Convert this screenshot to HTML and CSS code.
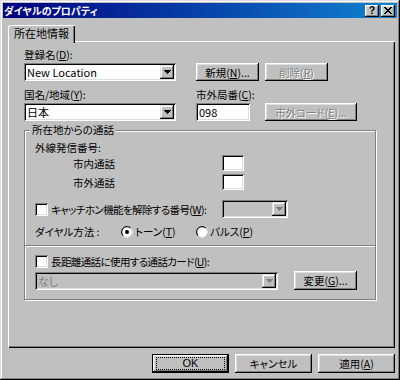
FILE: index.html
```html
<!DOCTYPE html>
<html lang="ja">
<head>
<meta charset="utf-8">
<title>ダイヤルのプロパティ</title>
<link rel="stylesheet" href="styles.css">
</head>
<body>
<div class="window">
  <div class="titlebar">
    <span class="title">ダイヤルのプロパティ</span>
    <span class="tb-btns">
      <span class="tb-btn help">?</span>
      <span class="tb-btn close"><svg width="8" height="7" viewBox="0 0 8 7" shape-rendering="crispEdges"><path d="M0 0h2v1h-2z M6 0h2v1h-2z M1 1h2v1h-2z M5 1h2v1h-2z M2 2h4v1h-4z M3 3h2v1h-2z M2 4h4v1h-4z M1 5h2v1h-2z M5 5h2v1h-2z M0 6h2v1h-2z M6 6h2v1h-2z" fill="#000"/></svg></span>
    </span>
  </div>
  <div class="content">
    <div class="tabs"><div class="tab">所在地情報</div></div>
    <div class="panel">
      <div class="lbl-row">
        <span class="col1">登録名(<u>D</u>):</span>
      </div>
      <div class="ctl-row">
        <div class="combo w152"><span class="val">New Location</span><span class="arrow"><svg width="7" height="4" viewBox="0 0 7 4" shape-rendering="crispEdges"><path d="M0 0h7v1h-1v1h-1v1h-1v1h-1v-1h-1v-1h-1v-1h-1z" fill="#000"/></svg></span></div>
        <span class="btn w63 ml20">新規(<u>N</u>)...</span>
        <span class="btn w63 ml6 disabled">削除(<u>R</u>)</span>
      </div>
      <div class="lbl-row mt7">
        <span class="col1">国名/地域(<u>Y</u>):</span>
        <span>市外局番(<u>C</u>):</span>
      </div>
      <div class="ctl-row">
        <div class="combo w152"><span class="val">日本</span><span class="arrow"><svg width="7" height="4" viewBox="0 0 7 4" shape-rendering="crispEdges"><path d="M0 0h7v1h-1v1h-1v1h-1v1h-1v-1h-1v-1h-1v-1h-1z" fill="#000"/></svg></span></div>
        <div class="field w54 ml20"><span class="val">098</span></div>
        <span class="btn w92 ml15 disabled">市外コード(<u>E</u>)...</span>
      </div>

      <div class="group">
        <div class="legend">所在地からの通話</div>
        <div class="line mt5">外線発信番号:</div>
        <div class="num-row mt1">
          <span class="num-lbl">市内通話</span>
          <span class="field small"></span>
        </div>
        <div class="num-row mt3">
          <span class="num-lbl">市外通話</span>
          <span class="field small"></span>
        </div>
        <div class="chk-row mt10">
          <span class="chk-lbl"><span class="check"></span><span class="tight">キャッチホン機能を解除する番号(<u>W</u>):</span></span>
          <div class="combo w66 off"><span class="val"></span><span class="arrow"><svg width="7" height="4" viewBox="0 0 7 4" shape-rendering="crispEdges"><path d="M0 0h7v1h-1v1h-1v1h-1v1h-1v-1h-1v-1h-1v-1h-1z" fill="#808080"/></svg></span></div>
        </div>
        <div class="dial-row mt7">
          <span class="dial-lbl">ダイヤル方法 :</span>
          <span class="radio-opt w75"><svg class="radio" width="12" height="12" viewBox="0 0 12 12"><circle cx="6" cy="6" r="5.5" fill="#fff" stroke="#808080"/><path d="M2.2 9.8 A5 5 0 0 1 9.8 2.2" fill="none" stroke="#000" stroke-width="1"/><path d="M9.8 2.2 A5 5 0 0 1 2.2 9.8" fill="none" stroke="#fff" stroke-width="1"/><circle cx="6" cy="6" r="2" fill="#000"/></svg>トーン(<u>T</u>)</span>
          <span class="radio-opt"><svg class="radio" width="12" height="12" viewBox="0 0 12 12"><circle cx="6" cy="6" r="5.5" fill="#fff" stroke="#808080"/><path d="M2.2 9.8 A5 5 0 0 1 9.8 2.2" fill="none" stroke="#000" stroke-width="1"/><path d="M9.8 2.2 A5 5 0 0 1 2.2 9.8" fill="none" stroke="#fff" stroke-width="1"/></svg>パルス(<u>P</u>)</span>
        </div>
        <div class="sep"></div>
        <div class="chk-row2">
          <span class="check"></span><span class="tight">長距離通話に使用する通話カード(<u>U</u>):</span>
        </div>
        <div class="card-row">
          <div class="combo w243 off"><span class="val gray">なし</span><span class="arrow"><svg width="7" height="4" viewBox="0 0 7 4" shape-rendering="crispEdges"><path d="M0 0h7v1h-1v1h-1v1h-1v1h-1v-1h-1v-1h-1v-1h-1z" fill="#808080"/></svg></span></div>
          <span class="btn w63 tall ml16">変更(<u>G</u>)...</span>
        </div>
      </div>
    </div>
    <div class="footer">
      <span class="btn default"><span class="focus">OK</span></span>
      <span class="btn fbtn">キャンセル</span>
      <span class="btn fbtn wide">適用(<u>A</u>)</span>
    </div>
  </div>
</div>
</body>
</html>
```

FILE: styles.css
```css
* { box-sizing: border-box; }
html, body { margin: 0; padding: 0; }
body {
  width: 400px; height: 380px; overflow: hidden;
  background: #c0c0c0;
  font-family: "Noto Sans CJK JP", "Liberation Sans", sans-serif;
  font-size: 10.5px; line-height: 13px; color: #000;
  font-feature-settings: "palt";
}
u { text-decoration: underline; text-underline-offset: 1px; }
.tight { letter-spacing: -0.6px; white-space: nowrap; }

.window {
  width: 400px; height: 380px; padding: 3px;
  background: #c0c0c0;
  box-shadow: inset -1px -1px #000, inset 1px 1px #dfdfdf, inset -2px -2px #808080, inset 2px 2px #fff;
  display: flex; flex-direction: column;
}
.titlebar {
  height: 15px; flex: none;
  background: linear-gradient(90deg, #000080, #1084d0);
  display: flex; align-items: center; justify-content: space-between;
  padding: 0 2px 0 1px;
}
.title { color: #fff; font-weight: bold; font-size: 10px; line-height: 15px; }
.tb-btns { display: flex; gap: 2px; }
.tb-btn {
  width: 14px; height: 12px; background: #c0c0c0;
  box-shadow: inset -1px -1px #000, inset 1px 1px #fff, inset -2px -2px #808080, inset 2px 2px #dfdfdf;
  display: flex; align-items: center; justify-content: center;
  font-family: "Liberation Sans", sans-serif; font-weight: bold; font-size: 10px; line-height: 10px;
}
.tb-btn svg { display: block; margin-left: -1px; }

.content { flex: 1; display: flex; flex-direction: column; padding: 7px 2px 0 5px; }
.tabs { display: flex; height: 16px; flex: none; position: relative; z-index: 1; }
.tab {
  width: 67px; height: 18px; background: #c0c0c0;
  box-shadow: inset 1px 1px #fff, inset -1px 0 #000, inset -2px 0 #808080;
  border-top-left-radius: 2px;
  text-align: center; line-height: 17px; font-size: 11px;
}
.panel {
  height: 307px; flex: none;
  box-shadow: inset 1px 1px #fff, inset -1px -1px #000, inset -2px -2px #808080;
  padding: 7px 0 0 16px;
}

.lbl-row { display: flex; height: 13px; }
.col1 { width: 172px; }
.ctl-row { display: flex; margin-top: 2px; height: 18px; }
.mt1 { margin-top: 1px; } .mt3 { margin-top: 3px; } .mt5 { margin-top: 5px; }
.mt7 { margin-top: 7px; } .mt10 { margin-top: 10px; }
.ml6 { margin-left: 6px; } .ml15 { margin-left: 15px; } .ml16 { margin-left: 16px; } .ml20 { margin-left: 20px; }
.w152 { width: 152px; } .w54 { width: 54px; } .w63 { width: 63px; } .w66 { width: 66px; }
.w75 { width: 75px; } .w92 { width: 92px; } .w243 { width: 243px; }

.field, .combo {
  height: 18px; background: #fff;
  box-shadow: inset 1px 1px #808080, inset -1px -1px #fff, inset 2px 2px #000, inset -2px -2px #dfdfdf;
  display: flex; align-items: center; padding: 0 2px 0 3px;
}
.combo { justify-content: space-between; }
.combo.off { background: #c0c0c0; }
.val { line-height: 14px; white-space: nowrap; font-size: 11px; }
.val.gray { color: #808080; }
.arrow {
  width: 14px; height: 14px; background: #c0c0c0;
  box-shadow: inset -1px -1px #000, inset 1px 1px #dfdfdf, inset -2px -2px #808080, inset 2px 2px #fff;
  display: flex; align-items: center; justify-content: center;
}
.arrow svg { display: block; }

.btn {
  height: 18px; background: #c0c0c0;
  box-shadow: inset -1px -1px #000, inset 1px 1px #fff, inset -2px -2px #808080, inset 2px 2px #dfdfdf;
  display: flex; align-items: center; justify-content: center;
  white-space: nowrap;
}
.btn.tall { height: 19px; }
.btn.disabled { color: #808080; text-shadow: 1px 1px 0 #fff; }

.group {
  margin-top: 9px; width: 352px;
  border: 1px solid #808080;
  box-shadow: inset 1px 1px #fff, 1px 1px #fff;
  padding: 0 0 9px 10px;
}
.legend {
  width: fit-content; height: 13px; margin: -8px 0 0 -5px;
  padding: 0 2px; background: #c0c0c0;
}
.line { height: 13px; }
.num-row { display: flex; align-items: center; height: 16px; }
.num-lbl { width: 187px; padding-left: 38px; }
.field.small { width: 22px; height: 16px; }
.chk-row { display: flex; align-items: center; height: 18px; }
.chk-lbl { width: 187px; display: flex; align-items: center; white-space: nowrap; overflow: hidden; }
.check {
  width: 13px; height: 13px; flex: none; background: #fff; margin-right: 3px;
  box-shadow: inset 1px 1px #808080, inset -1px -1px #fff, inset 2px 2px #000, inset -2px -2px #dfdfdf;
}
.dial-row { display: flex; align-items: center; height: 13px; }
.dial-lbl { width: 86px; }
.radio-opt { display: flex; align-items: center; }
.radio { display: block; margin-right: 2px; flex: none; }
.sep {
  margin: 7px 0 0 -10px; height: 2px;
  border-top: 1px solid #808080; border-bottom: 1px solid #fff;
}
.chk-row2 { display: flex; align-items: center; height: 13px; margin-top: 8px; }
.card-row { display: flex; align-items: flex-end; height: 19px; margin-top: 3px; }

.footer { display: flex; justify-content: flex-end; gap: 6px; margin-top: 6px; height: 19px; }
.fbtn { width: 77px; height: 19px; }
.btn.default {
  width: 77px; height: 19px; padding: 3px 4px;
  box-shadow: inset 0 0 0 1px #000, inset -2px -2px #000, inset 2px 2px #fff, inset -3px -3px #808080, inset 3px 3px #dfdfdf;
}
.focus {
  width: 100%; height: 100%; outline: 1px dotted #000; outline-offset: -1px;
  display: flex; align-items: center; justify-content: center;
  font-family: "Liberation Sans", sans-serif; font-size: 11px;
}
```
